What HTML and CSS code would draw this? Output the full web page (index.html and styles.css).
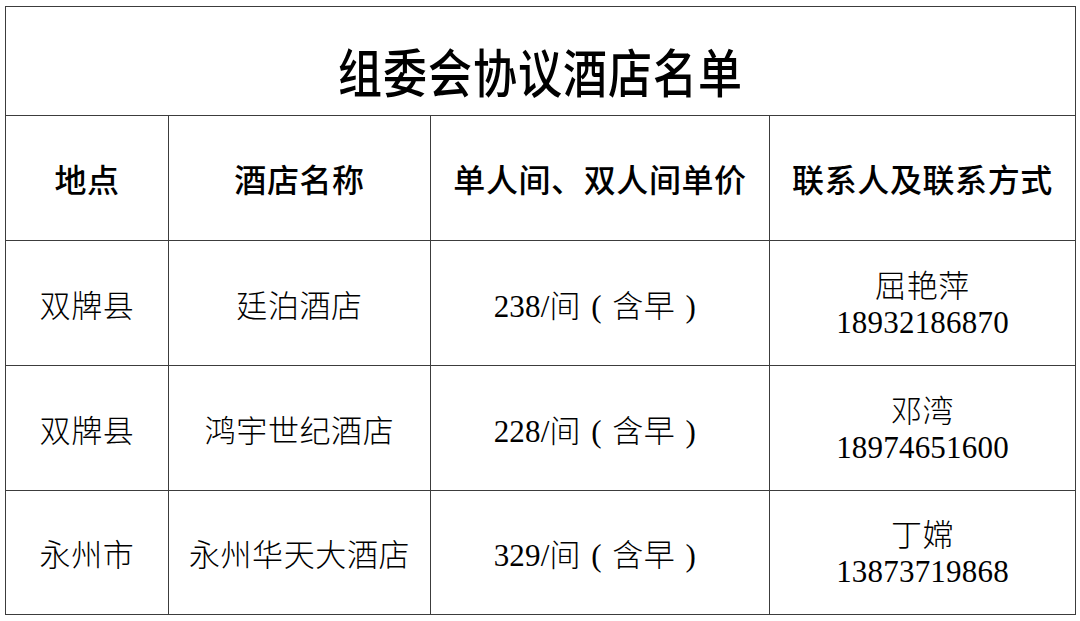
FILE: index.html
```html
<!DOCTYPE html>
<html lang="zh-CN">
<head>
<meta charset="utf-8">
<title>组委会协议酒店名单</title>
<link rel="stylesheet" href="styles.css">
</head>
<body>
<table class="list">
  <colgroup>
    <col class="c1"><col class="c2"><col class="c3"><col class="c4">
  </colgroup>
  <tr class="title-row"><td colspan="4"><span class="title">组委会协议酒店名单</span></td></tr>
  <tr class="head-row">
    <th>地点</th>
    <th>酒店名称</th>
    <th>单人间、双人间单价</th>
    <th>联系人及联系方式</th>
  </tr>
  <tr class="row">
    <td>双牌县</td>
    <td>廷泊酒店</td>
    <td><span class="num">238/</span>间<span class="paren">(</span>含早<span class="paren">)</span></td>
    <td><div class="name">屈艳萍</div><div class="num phone">18932186870</div></td>
  </tr>
  <tr class="row">
    <td>双牌县</td>
    <td>鸿宇世纪酒店</td>
    <td><span class="num">228/</span>间<span class="paren">(</span>含早<span class="paren">)</span></td>
    <td><div class="name">邓湾</div><div class="num phone">18974651600</div></td>
  </tr>
  <tr class="row last">
    <td>永州市</td>
    <td>永州华天大酒店</td>
    <td><span class="num">329/</span>间<span class="paren">(</span>含早<span class="paren">)</span></td>
    <td><div class="name">丁嫦</div><div class="num phone">13873719868</div></td>
  </tr>
</table>
</body>
</html>
```
FILE: styles.css
```css
html, body {
  margin: 0;
  padding: 0;
  background: #ffffff;
}
body {
  padding: 6px 0 0 5px;
  font-family: "Noto Sans CJK SC", sans-serif;
  color: #000;
}
.list {
  border-collapse: collapse;
  table-layout: fixed;
  width: 1070px;
}
.c1 { width: 163px; }
.c2 { width: 262px; }
.c3 { width: 339px; }
.c4 { width: 306px; }
.list td, .list th {
  border: 1px solid #3c3c3c;
  padding: 0;
  text-align: center;
  vertical-align: middle;
}
.title-row td { height: 108px; }
.title {
  display: inline-block;
  font-size: 44px;
  font-weight: 500;
  letter-spacing: 1px;
  transform: scaleY(1.2);
  position: relative;
  top: 9px;
}
.head-row th {
  height: 124px;
  font-size: 32px;
  font-weight: 500;
  letter-spacing: 0.6px;
}
.row td {
  height: 124px;
  font-size: 31px;
  font-weight: 300;
  letter-spacing: 0.6px;
}
.row.last td { height: 123px; }
.list .num {
  font-family: "Liberation Serif", "Tinos", "Times New Roman", serif;
  font-size: 31px;
  font-weight: 400;
  letter-spacing: 0.2px;
}
.list .paren {
  display: inline-block;
  width: 31px;
  font-family: "Liberation Serif", "Times New Roman", serif;
  font-weight: 400;
  text-align: center;
}
.name { line-height: 36px; }
.phone { line-height: 36px; margin-top: 3px; }
```
